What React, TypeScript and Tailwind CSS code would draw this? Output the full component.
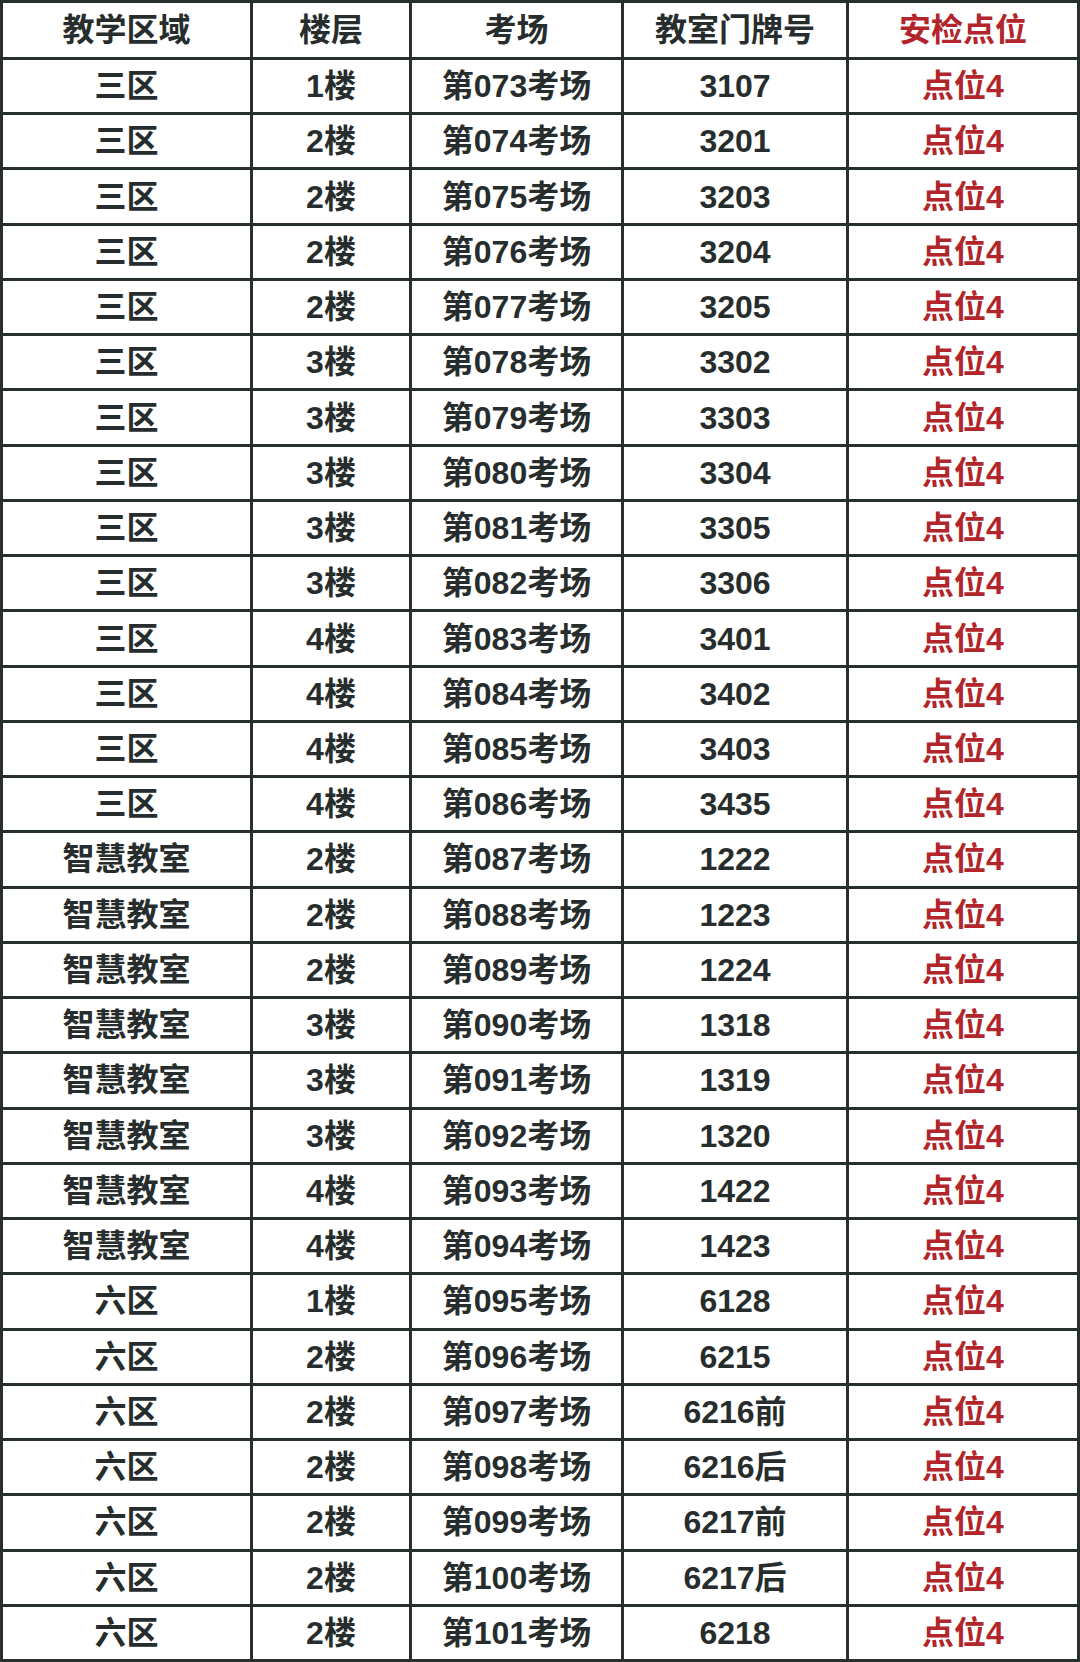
const rows: [string, string, string, string][] = [
  ["三区", "1楼", "第073考场", "3107"],
  ["三区", "2楼", "第074考场", "3201"],
  ["三区", "2楼", "第075考场", "3203"],
  ["三区", "2楼", "第076考场", "3204"],
  ["三区", "2楼", "第077考场", "3205"],
  ["三区", "3楼", "第078考场", "3302"],
  ["三区", "3楼", "第079考场", "3303"],
  ["三区", "3楼", "第080考场", "3304"],
  ["三区", "3楼", "第081考场", "3305"],
  ["三区", "3楼", "第082考场", "3306"],
  ["三区", "4楼", "第083考场", "3401"],
  ["三区", "4楼", "第084考场", "3402"],
  ["三区", "4楼", "第085考场", "3403"],
  ["三区", "4楼", "第086考场", "3435"],
  ["智慧教室", "2楼", "第087考场", "1222"],
  ["智慧教室", "2楼", "第088考场", "1223"],
  ["智慧教室", "2楼", "第089考场", "1224"],
  ["智慧教室", "3楼", "第090考场", "1318"],
  ["智慧教室", "3楼", "第091考场", "1319"],
  ["智慧教室", "3楼", "第092考场", "1320"],
  ["智慧教室", "4楼", "第093考场", "1422"],
  ["智慧教室", "4楼", "第094考场", "1423"],
  ["六区", "1楼", "第095考场", "6128"],
  ["六区", "2楼", "第096考场", "6215"],
  ["六区", "2楼", "第097考场", "6216前"],
  ["六区", "2楼", "第098考场", "6216后"],
  ["六区", "2楼", "第099考场", "6217前"],
  ["六区", "2楼", "第100考场", "6217后"],
  ["六区", "2楼", "第101考场", "6218"],
];

const headers = ["教学区域", "楼层", "考场", "教室门牌号"];

function Cell({ children, red }: { children: React.ReactNode; red?: boolean }) {
  return (
    <div
      className={
        "bg-white flex items-center justify-center leading-none " +
        (red ? "text-[#b1252b]" : "text-[#272d2d]")
      }
    >
      {children}
    </div>
  );
}

export default function App() {
  return (
    <div className="w-[1080px] h-[1662px] bg-[#27302e] p-[3px] font-['Liberation_Sans','Noto_Sans_CJK_SC',sans-serif] font-bold text-[32px]">
      <div className="grid h-full grid-cols-[247fr_156fr_209fr_222fr_228fr] grid-rows-[54px_repeat(29,minmax(0,1fr))] gap-[3px]">
        {headers.map((h) => (
          <Cell key={h}>{h}</Cell>
        ))}
        <Cell red>安检点位</Cell>
        {rows.map((r, i) => (
          <>
            <Cell key={i + "a"}>{r[0]}</Cell>
            <Cell key={i + "b"}>{r[1]}</Cell>
            <Cell key={i + "c"}>{r[2]}</Cell>
            <Cell key={i + "d"}>{r[3]}</Cell>
            <Cell key={i + "e"} red>
              点位4
            </Cell>
          </>
        ))}
      </div>
    </div>
  );
}
